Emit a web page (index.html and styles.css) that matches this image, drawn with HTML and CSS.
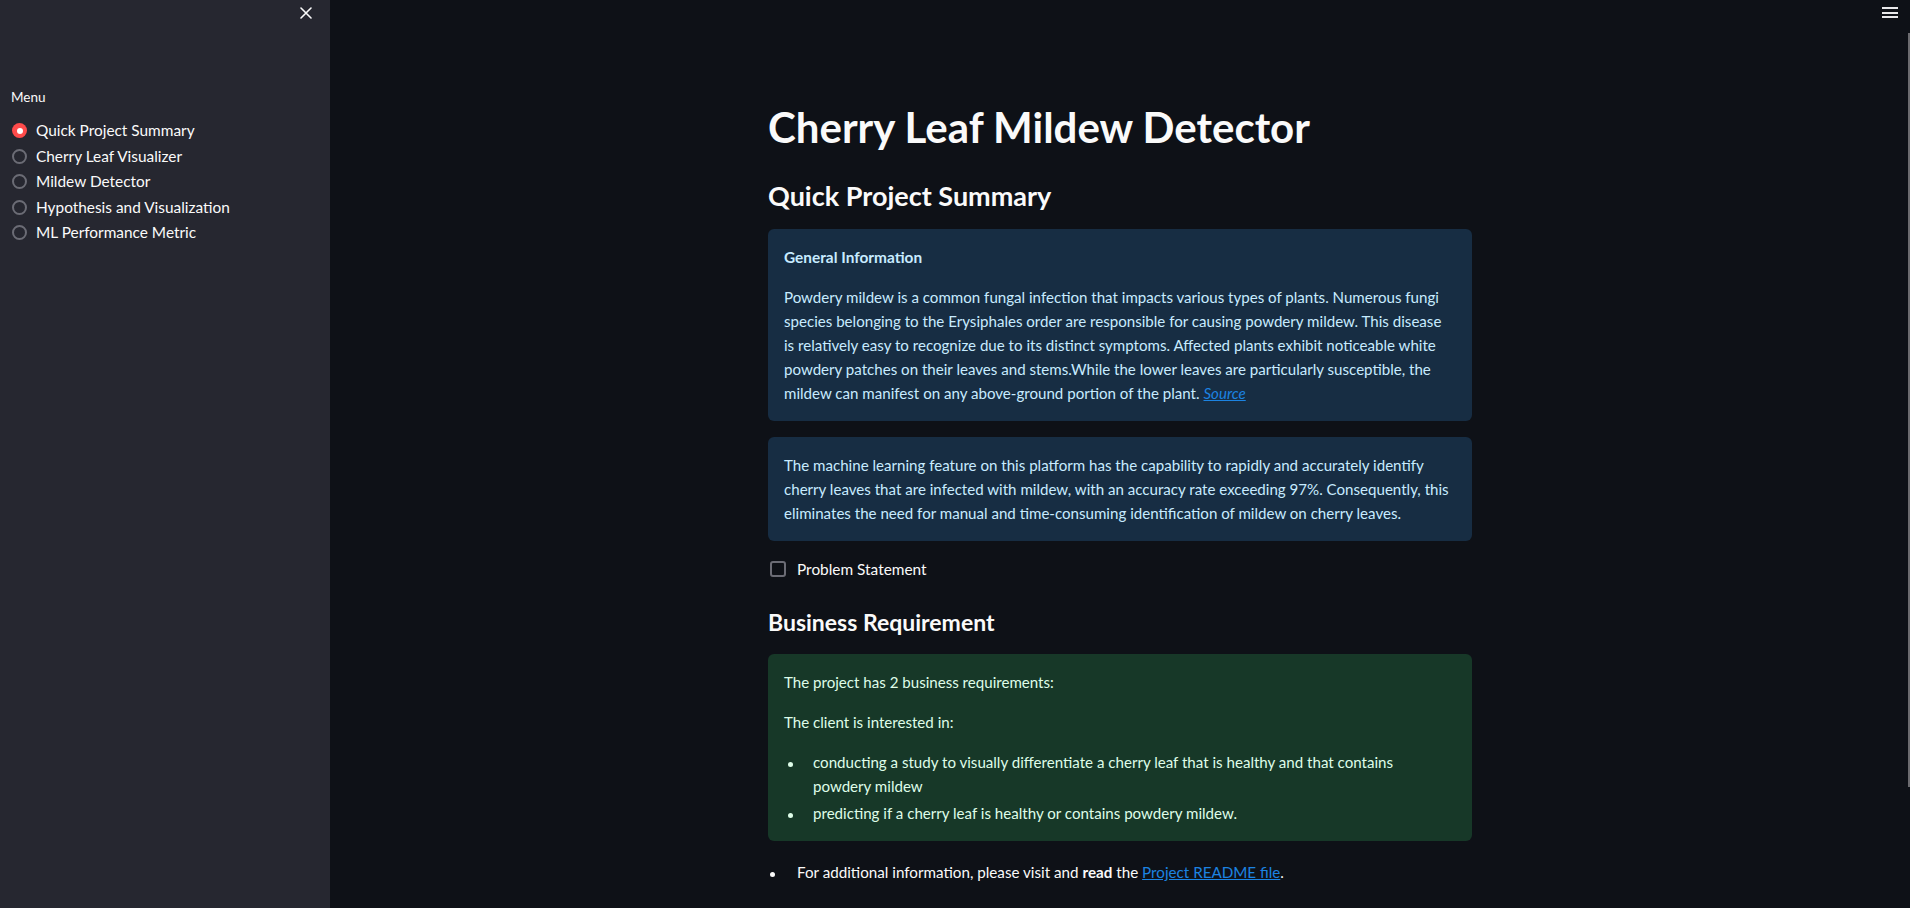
FILE: index.html
```html
<!DOCTYPE html>
<html lang="en">
<head>
<meta charset="utf-8">
<title>Cherry Leaf Mildew Detector</title>
<link rel="stylesheet" href="styles.css">
</head>
<body>
<div class="app">
  <aside class="sidebar">
    <div class="sidebar-top">
      <button class="close-btn" aria-label="Close sidebar">
        <svg width="12" height="12" viewBox="0 0 12 12"><path d="M1 1 L11 11 M11 1 L1 11" stroke="#fafafa" stroke-width="1.6" stroke-linecap="round"/></svg>
      </button>
    </div>
    <div class="menu-label">Menu</div>
    <div class="radio-group">
      <label class="radio"><span class="radio-dot selected"></span><span>Quick Project Summary</span></label>
      <label class="radio"><span class="radio-dot"></span><span>Cherry Leaf Visualizer</span></label>
      <label class="radio"><span class="radio-dot"></span><span>Mildew Detector</span></label>
      <label class="radio"><span class="radio-dot"></span><span>Hypothesis and Visualization</span></label>
      <label class="radio"><span class="radio-dot"></span><span>ML Performance Metric</span></label>
    </div>
  </aside>
  <main class="main">
    <header class="topbar">
      <button class="menu-btn" aria-label="Main menu">
        <span></span><span></span><span></span>
      </button>
    </header>
    <div class="block">
      <h1 class="title">Cherry Leaf Mildew Detector</h1>
      <h2 class="subheader">Quick Project Summary</h2>
      <div class="alert info">
        <p class="strong">General Information</p>
        <p>Powdery mildew is a common fungal infection that impacts various types of plants. Numerous fungi species belonging to the Erysiphales order are responsible for causing powdery mildew. This disease<br>is relatively easy to recognize due to its distinct symptoms. Affected plants exhibit noticeable white powdery patches on their leaves and stems.While the lower leaves are particularly susceptible, the mildew can manifest on any above-ground portion of the plant. <a href="#" class="link"><em>Source</em></a></p>
      </div>
      <div class="alert info second">
        <p>The machine learning feature on this platform has the capability to rapidly and accurately identify cherry leaves that are infected with mildew, with an accuracy rate exceeding 97%. Consequently, this eliminates the need for manual and time-consuming identification of mildew on cherry leaves.</p>
      </div>
      <label class="checkbox"><span class="check-box"></span><span>Problem Statement</span></label>
      <h3 class="section">Business Requirement</h3>
      <div class="alert success">
        <p>The project has 2 business requirements:</p>
        <p>The client is interested in:</p>
        <ul class="bullets">
          <li>conducting a study to visually differentiate a cherry leaf that is healthy and that contains powdery mildew</li>
          <li>predicting if a cherry leaf is healthy or contains powdery mildew.</li>
        </ul>
      </div>
      <ul class="bullets more">
        <li>For additional information, please visit and <strong>read</strong> the <a href="#" class="link">Project README file</a>.</li>
      </ul>
    </div>
    <div class="scroll-thumb"></div>
  </main>
</div>
</body>
</html>
```
FILE: styles.css
```css
* { box-sizing: border-box; }
html, body { margin: 0; padding: 0; height: 100%; }
body {
  background: #0e1117;
  color: #fafafa;
  font-family: Lato, "Source Sans Pro", "Noto Sans", sans-serif;
  font-size: 15.2px;
  line-height: 24px;
  overflow: hidden;
}
.app { display: flex; height: 100vh; }

/* Sidebar */
.sidebar {
  width: 330px;
  flex: none;
  background: #262730;
  display: flex;
  flex-direction: column;
}
.sidebar-top {
  height: 26px;
  display: flex;
  justify-content: flex-end;
  align-items: center;
  padding-right: 18px;
}
.close-btn {
  background: none;
  border: 0;
  padding: 0;
  width: 12px;
  height: 12px;
  display: flex;
}
.menu-label {
  margin: 61px 0 0 11px;
  font-size: 13.5px;
  line-height: 20px;
}
.radio-group {
  display: flex;
  flex-direction: column;
  gap: 1.5px;
  margin-top: 11px;
  padding-left: 12px;
}
.radio {
  display: flex;
  align-items: center;
  gap: 9px;
  height: 24px;
  font-size: 15.4px;
}
.radio-dot {
  width: 15px;
  height: 15px;
  border-radius: 50%;
  border: 2px solid #6b6c75;
  flex: none;
  margin-top: 1px;
}
.radio-dot.selected {
  border: 0;
  background: #ff4b4b;
  display: flex;
  align-items: center;
  justify-content: center;
}
.radio-dot.selected::after {
  content: "";
  width: 6px;
  height: 6px;
  border-radius: 50%;
  background: #ffffff;
}

/* Main */
.main {
  flex: 1;
  position: relative;
  display: flex;
  flex-direction: column;
  align-items: center;
  overflow: hidden;
}
.topbar {
  align-self: stretch;
  height: 46px;
  display: flex;
  justify-content: flex-end;
  padding: 7px 12px 0 0;
  flex: none;
}
.menu-btn {
  background: none;
  border: 0;
  padding: 0;
  width: 16px;
  height: 11px;
  display: flex;
  flex-direction: column;
  justify-content: space-between;
}
.menu-btn span {
  display: block;
  height: 2px;
  width: 16px;
  background: #e8e8ea;
}
.block {
  width: 704px;
  padding-top: 55px;
}
.title {
  margin: 0;
  font-size: 42px;
  line-height: 52px;
  font-weight: 700;
}
.subheader {
  margin: 26px 0 0;
  font-size: 27px;
  line-height: 34px;
  font-weight: 700;
}
.alert {
  border-radius: 6px;
  padding: 16px;
  margin-top: 16px;
  font-size: 15.1px;
}
.alert p { margin: 0 0 16px; }
.alert p:last-child { margin-bottom: 0; }
.info { background: #172d43; color: #c7ebff; }
.info.second { margin-top: 16px; }
.success { background: #173828; color: #dffde9; margin-top: 17px; }
.strong { font-weight: 700; font-size: 15.4px; }
.link { color: #1c83e1; text-decoration: underline; }
.checkbox {
  display: flex;
  align-items: center;
  gap: 11px;
  margin-top: 16px;
  height: 24px;
  padding-left: 2px;
  font-size: 15.4px;
}
.check-box {
  width: 16px;
  height: 16px;
  border: 2px solid #6b6c75;
  border-radius: 3px;
  flex: none;
}
.section {
  margin: 26px 0 0;
  font-size: 23px;
  line-height: 30px;
  font-weight: 700;
}
.bullets {
  list-style: none;
  margin: 16px 0 0;
  padding: 0;
}
.bullets li {
  padding-left: 29px;
  padding-right: 14px;
}
.bullets li::before {
  content: "";
  display: inline-block;
  width: 5px;
  height: 5px;
  border-radius: 50%;
  background: currentColor;
  margin-left: -25px;
  margin-right: 20px;
  vertical-align: middle;
}
.bullets li + li { margin-top: 3px; }
.more { margin-top: 19px; }
.more li::before { margin-left: -27px; margin-right: 22px; }
.more strong { font-weight: 700; }
.scroll-thumb {
  position: absolute;
  right: 0;
  top: 33px;
  width: 2px;
  height: 754px;
  background: #6b6b6f;
}
```
